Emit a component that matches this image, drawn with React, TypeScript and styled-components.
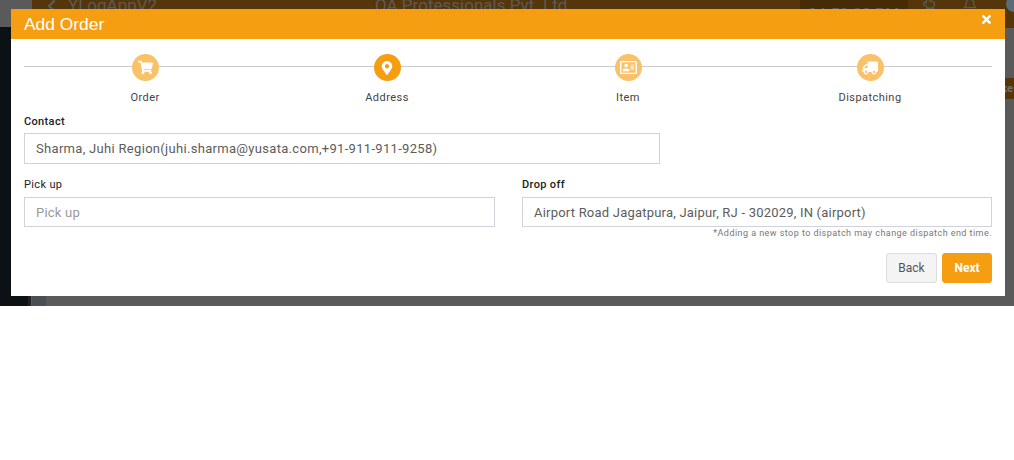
import React from 'react'
import styled, { createGlobalStyle } from 'styled-components'
import {
  FaChevronLeft,
  FaMapMarkerAlt,
  FaRegAddressCard,
  FaRegBell,
  FaRegHandPointUp,
  FaShoppingCart,
  FaTimes,
  FaTruck,
} from 'react-icons/fa'

const GlobalStyle = createGlobalStyle`
  html, body {
    margin: 0;
    padding: 0;
    background: #fff;
    font-family: Roboto, "Liberation Sans", sans-serif;
  }
`

const Page = styled.div`
  position: relative;
  width: 1014px;
  height: 306px;
  overflow: hidden;
  display: flex;
  background: #5a5a5a;
`

const Sidebar = styled.div`
  width: 28px;
  display: flex;
  flex-direction: column;
  background: #0b1114;
  border-right: 3px solid #222;
  box-sizing: content-box;
`

const SidebarLogo = styled.div`
  height: 27px;
  margin-right: -4px;
  background: #5a5a5a;
`

const Main = styled.div`
  flex: 1;
  display: flex;
  flex-direction: column;
  margin-left: 1px;
`

const TopBar = styled.div`
  height: 28px;
  display: flex;
  background: #55360a;
  color: #5d5a55;
  font-size: 17px;
  overflow: hidden;
`

const AppName = styled.div`
  width: 343px;
  box-sizing: border-box;
  padding-left: 15px;
  display: flex;
  gap: 12px;
  margin-top: -5px;
  white-space: nowrap;

  svg {
    flex: none;
    margin-top: 3px;
    width: 9px;
    height: 16px;
  }
`

const Company = styled.div`
  width: 425px;
  margin-top: -5px;
  white-space: nowrap;
`

const Clock = styled.div`
  width: 108px;
  height: 28px;
  padding: 5px 0 0 8px;
  box-sizing: border-box;
  background: #452b06;
  white-space: nowrap;
  font-size: 16px;
  font-weight: 500;
`

const TopIcons = styled.div`
  display: flex;
  padding: 0 0 0 14px;
  gap: 27px;
  font-size: 14px;

  svg {
    margin-top: -3px;
  }
`

const Avatar = styled.div`
  position: absolute;
  left: 1006px;
  top: -4px;
  width: 16px;
  height: 16px;
  border-radius: 50%;
  background: #5c6b78;
`

const SideTag = styled.div`
  position: absolute;
  right: 0;
  top: 78px;
  height: 21px;
  line-height: 21px;
  padding: 0 1px 0 30px;
  background: #55360a;
  color: #75706a;
  font-size: 11px;
  font-weight: 700;
`

const Backdrop = styled.div`
  flex: 1;
  display: flex;
`

const BackdropRail = styled.div`
  width: 14px;
  background: #4b4f55;
`

const Modal = styled.div`
  position: absolute;
  left: 11px;
  top: 9px;
  width: 994px;
  height: 287px;
  background: #fff;
  display: flex;
  flex-direction: column;
`

const Header = styled.div`
  height: 30px;
  flex: none;
  box-sizing: border-box;
  padding: 1px 13px 0;
  display: flex;
  align-items: center;
  justify-content: space-between;
  background: #f59e12;
  color: #fff;
  font-family: "Liberation Sans", Arial, sans-serif;
  font-size: 17.4px;
`

const Close = styled.span`
  display: flex;
  margin: -11px -1px 0 0;
  font-size: 13px;
`

const Body = styled.div`
  flex: 1;
  padding: 15px 13px 13px;
  display: flex;
  flex-direction: column;
`

const Steps = styled.div`
  position: relative;
  display: grid;
  grid-template-columns: 242px 242px 240px 244px;
  height: 62px;

  &::before {
    content: '';
    position: absolute;
    left: 0;
    right: 0;
    top: 12px;
    height: 1px;
    background: #ccc;
  }
`

const Step = styled.div`
  position: relative;
  display: flex;
  flex-direction: column;
  align-items: center;
  color: #444;
  font-size: 11px;
  letter-spacing: 0.45px;
`

const StepCircle = styled.div<{ $active?: boolean }>`
  width: 27px;
  height: 27px;
  margin-bottom: 10px;
  border-radius: 50%;
  display: flex;
  align-items: center;
  justify-content: center;
  color: #fff;
  font-size: 14px;
  background: ${({ $active }) => ($active ? '#f59e12' : '#f9c268')};
`

const FlippedTruck = styled(FaTruck)`
  transform: scaleX(-1);
`

const Label = styled.div<{ $bold?: boolean; $tight?: boolean }>`
  height: 12px;
  line-height: 12px;
  margin-bottom: ${({ $tight }) => ($tight ? '5px' : '6px')};
  color: #222;
  font-size: 11px;
  letter-spacing: 0.35px;
  font-weight: ${({ $bold }) => ($bold ? 500 : 400)};
`

const Input = styled.input<{ $tall?: boolean }>`
  display: block;
  width: 100%;
  height: ${({ $tall }) => ($tall ? '31px' : '30px')};
  box-sizing: border-box;
  padding: 0 11px;
  border: 1px solid #d0d3dc;
  border-radius: 0;
  outline: none;
  color: #5c5c5c;
  font-family: Roboto, "Liberation Sans", sans-serif;
  font-size: 13px;
  letter-spacing: ${({ $tall }) => ($tall ? '0.31px' : '0.21px')};

  &::placeholder {
    color: #999;
    opacity: 1;
  }
`

const ContactField = styled.div`
  width: 636px;
  margin-bottom: 15px;
`

const StopsRow = styled.div`
  display: grid;
  grid-template-columns: 471px 470px;
  column-gap: 27px;
`

const Note = styled.div`
  margin-top: 1px;
  height: 11px;
  line-height: 11px;
  text-align: right;
  color: #777;
  font-size: 9px;
  letter-spacing: 0.45px;
`

const Actions = styled.div`
  margin-top: 14px;
  display: flex;
  justify-content: flex-end;
  gap: 5px;
`

const Button = styled.button<{ $primary?: boolean }>`
  height: 30px;
  width: ${({ $primary }) => ($primary ? '50px' : '51px')};
  padding: 0;
  border-radius: 3px;
  border: 1px solid ${({ $primary }) => ($primary ? '#f59e12' : '#ddd')};
  background: ${({ $primary }) => ($primary ? '#f59e12' : '#f4f4f4')};
  color: ${({ $primary }) => ($primary ? '#fff' : '#555')};
  font-family: Roboto, "Liberation Sans", sans-serif;
  font-size: 12px;
  font-weight: ${({ $primary }) => ($primary ? 700 : 400)};
`

const steps = [
  { name: 'Order', icon: <FaShoppingCart size={15} /> },
  { name: 'Address', icon: <FaMapMarkerAlt size={14} />, active: true },
  { name: 'Item', icon: <FaRegAddressCard size={17} /> },
  { name: 'Dispatching', icon: <FlippedTruck size={16} /> },
]

export default function App() {
  return (
    <>
      <GlobalStyle />
      <Page>
        <Sidebar>
          <SidebarLogo />
        </Sidebar>
        <Main>
          <TopBar>
            <AppName>
              <FaChevronLeft />
              YLogAppV2
            </AppName>
            <Company>OA Professionals Pvt. Ltd</Company>
            <Clock>04:52:22 PM</Clock>
            <TopIcons>
              <FaRegHandPointUp />
              <FaRegBell />
            </TopIcons>
          </TopBar>
          <Backdrop>
            <BackdropRail />
          </Backdrop>
        </Main>
        <Avatar />
        <SideTag>Make</SideTag>
        <Modal>
          <Header>
            Add Order
            <Close>
              <FaTimes />
            </Close>
          </Header>
          <Body>
            <Steps>
              {steps.map((step) => (
                <Step key={step.name}>
                  <StepCircle $active={step.active}>{step.icon}</StepCircle>
                  {step.name}
                </Step>
              ))}
            </Steps>
            <ContactField>
              <Label $bold $tight>
                Contact
              </Label>
              <Input
                $tall
                readOnly
                value="Sharma, Juhi Region(juhi.sharma@yusata.com,+91-911-911-9258)"
              />
            </ContactField>
            <StopsRow>
              <div>
                <Label>Pick up</Label>
                <Input placeholder="Pick up" />
              </div>
              <div>
                <Label $bold>Drop off</Label>
                <Input readOnly value="Airport Road Jagatpura, Jaipur, RJ - 302029, IN (airport)" />
                <Note>*Adding a new stop to dispatch may change dispatch end time.</Note>
              </div>
            </StopsRow>
            <Actions>
              <Button>Back</Button>
              <Button $primary>Next</Button>
            </Actions>
          </Body>
        </Modal>
      </Page>
    </>
  )
}
